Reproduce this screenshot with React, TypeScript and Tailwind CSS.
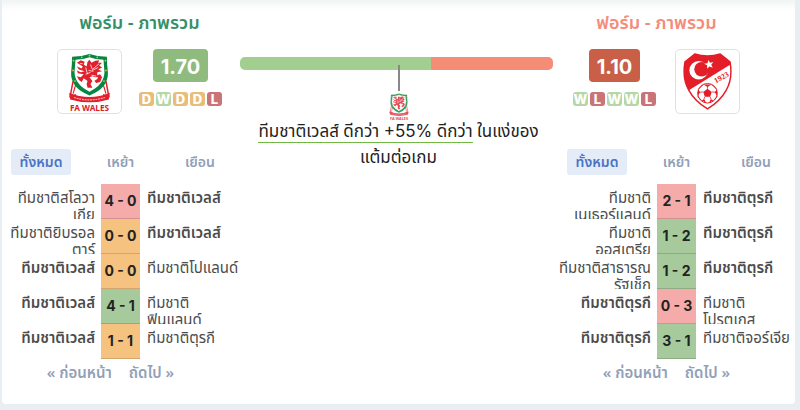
import React from "react";

type Result = "W" | "D" | "L";
type Match = { home: string[]; away: string[]; score: string; result: Result; bold: "home" | "away" };

const badgeColor: Record<Result, string> = { W: "bg-[#b5d7a5]", D: "bg-[#e9bd79]", L: "bg-[#c97476]" };
const scoreColor: Record<Result, string> = {
  W: "bg-[#a7ca9d] border-[#8dac85]",
  D: "bg-[#f5c27f] border-[#d1a56d]",
  L: "bg-[#f6abab] border-[#d29292]",
};

const wales = "ทีมชาติเวลส์";
const turkey = "ทีมชาติตุรกี";

const walesMatches: Match[] = [
  { home: ["ทีมชาติสโลวา", "เกีย"], away: [wales], score: "4 - 0", result: "L", bold: "away" },
  { home: ["ทีมชาติยิบรอล", "ตาร์"], away: [wales], score: "0 - 0", result: "D", bold: "away" },
  { home: [wales], away: ["ทีมชาติโปแลนด์"], score: "0 - 0", result: "D", bold: "home" },
  { home: [wales], away: ["ทีมชาติ", "ฟินแลนด์"], score: "4 - 1", result: "W", bold: "home" },
  { home: [wales], away: [turkey], score: "1 - 1", result: "D", bold: "home" },
];

const turkeyMatches: Match[] = [
  { home: ["ทีมชาติ", "เนเธอร์แลนด์"], away: [turkey], score: "2 - 1", result: "L", bold: "away" },
  { home: ["ทีมชาติ", "ออสเตรีย"], away: [turkey], score: "1 - 2", result: "W", bold: "away" },
  { home: ["ทีมชาติสาธารณ", "รัฐเช็ก"], away: [turkey], score: "1 - 2", result: "W", bold: "away" },
  { home: [turkey], away: ["ทีมชาติ", "โปรตุเกส"], score: "0 - 3", result: "L", bold: "home" },
  { home: [turkey], away: ["ทีมชาติจอร์เจีย"], score: "3 - 1", result: "W", bold: "home" },
];

function WalesCrest({ className }: { className: string }) {
  return (
    <svg viewBox="0 0 44 60" className={className} role="img" aria-label="FA Wales">
      <path d="M5 29 L2 45 L8 43 M39 29 L42 45 L36 43" fill="#fff" stroke="#e0202c" strokeWidth="1.5" />
      <path d="M8 32 L5 42 M36 32 L39 42" stroke="#e0202c" strokeWidth="1.2" />
      <path d="M4 4 Q13 4 22 1 Q31 4 40 4 Q40 12 41 20 Q42 36 22 44 Q2 36 3 20 Q4 12 4 4Z" fill="#078641" />
      <path d="M7.500 7 Q16 7 22 4.500 Q28 7 36.500 7 Q37 14 37.500 20 Q37 33 22 40 Q7 33 6.500 20 Q7 14 7.500 7Z" fill="#fff" />
      <g fill="#e3c52d">
        <circle cx="5.500" cy="8" r=".9" /><circle cx="5" cy="18" r=".9" /><circle cx="7" cy="29" r=".9" />
        <circle cx="38.500" cy="8" r=".9" /><circle cx="39" cy="18" r=".9" /><circle cx="37" cy="29" r=".9" />
        <circle cx="14" cy="4.500" r=".9" /><circle cx="22" cy="2.800" r=".9" /><circle cx="30" cy="4.500" r=".9" />
      </g>
      <path
        d="M9 10 L13 7.500 L17 9 L16 12 L19 14 L20 9 L22 7 L24 10 L28 8 L32 7.500 L31 10 L35 10 L32 13 L35 15 L31 17 L35 19 L30 20 L30 23 L33 22 L35 25 L33 30 L29 31 L27 29 L30 27 L31 25 L28 25 L25 24 L22 25 L25 29 L23 32 L25 36 L20 36 L19 32 L20 29 L16 26 L14 30 L11 28 L9 24 L13 25 L16 22 L10 21 L9 18 L13 20 L17 19 L11 17 L9 14 L14 16 L15 14Z"
        fill="#e0202c"
      />
      <path d="M23 12 L25 17 L32 11 M25 18 L31 15 M21 18 L26 19 M18 22 L23 20 M12 11 L15 11 M24 23 L29 24 M18 15 L20 22" stroke="#fff" strokeWidth=".8" fill="none" />
      <path d="M1 41 Q22 50 43 41 L42 48 Q22 54 2 48Z" fill="#e0202c" />
      <path d="M6 46 Q22 51 38 46" fill="none" stroke="#f7b0b3" strokeWidth="1.2" strokeDasharray="2 .8" />
      <text x="22" y="59.500" textAnchor="middle" fontSize="8.500" fontWeight="700" fill="#d8202c" fontFamily="'Noto Sans', sans-serif">FA WALES</text>
    </svg>
  );
}

function TurkeyCrest({ className }: { className: string }) {
  return (
    <svg viewBox="0 0 50 58" className={className} role="img" aria-label="Türkiye 1923">
      <path d="M12 1 Q25 5 38 1 L48 9 Q51 26 44 38 Q38 49 25 57 Q12 49 6 38 Q-1 26 2 9Z" fill="#fff" stroke="#e31e28" strokeWidth="1.5" />
      <path d="M12 1 Q25 5 38 1 L48 9 L48 12 L6 38 Q-1 26 2 9Z" fill="#e31e28" />
      <circle cx="16" cy="17.500" r="9.500" fill="#fff" />
      <circle cx="19" cy="16.500" r="7.500" fill="#e31e28" />
      <path d="M26 7 L27.500 9.800 L31 9 L28.800 11.800 L30.400 15 L27 13.600 L24.500 16 L24.700 12.500 L21.500 11 L25 10.300Z" fill="#fff" />
      <text transform="translate(33.500 31) rotate(-29)" fontSize="8" fontWeight="700" fill="#e31e28" fontFamily="Liberation Serif, serif">1923</text>
      <circle cx="25" cy="41" r="10" fill="#fff" stroke="#e31e28" />
      <path d="M25 36.500 L29.300 39.600 L27.700 44.600 L22.300 44.600 L20.700 39.600Z M21 32 L29 32 L25 34.500Z M34.500 37 L35 44 L32.500 40Z M31.500 48 L26.500 51 L28 47.500Z M18.500 48 L23.500 51 L22 47.500Z M15.500 37 L15 44 L17.500 40Z" fill="#e31e28" />
      <path d="M25 36.500 V34 M29.300 39.600 L33 40 M27.700 44.600 L29 48 M22.300 44.600 L21 48 M20.700 39.600 L17 40 M29 32 L34.500 37 M21 32 L15.500 37 M35 44 L31.500 48 M15 44 L18.500 48" stroke="#e31e28" strokeWidth=".8" />
    </svg>
  );
}

function CrestBox({ children }: { children: React.ReactNode }) {
  return (
    <div className="flex size-[65px] items-center justify-center rounded-[5px] border border-[#dfe1ea] bg-white">{children}</div>
  );
}

function FormScore({ value, color, form }: { value: string; color: string; form: Result[] }) {
  return (
    <div className="flex flex-col items-center gap-[10px]">
      <div className={`flex h-[33px] items-center rounded-[4px] px-2 pt-[3px] font-['Inter',sans-serif] text-[20px] font-bold text-white ${color}`}>
        {value}
      </div>
      <div className="flex gap-[2px]">
        {form.map((r, i) => (
          <span
            key={i}
            className={`flex h-[14px] w-[15px] items-center justify-center rounded-[3px] pt-px font-['Inter',sans-serif] text-[13px] font-extrabold leading-[13px] text-white ${badgeColor[r]}`}
          >
            {r}
          </span>
        ))}
      </div>
    </div>
  );
}

function Lines({ lines }: { lines: string[] }) {
  return (
    <div className="h-[35px] overflow-y-clip whitespace-nowrap pt-[5px] leading-[17px]">
      {lines.map((line) => (
        <div key={line}>{line}</div>
      ))}
    </div>
  );
}

function Results({ matches, label }: { matches: Match[]; label: string }) {
  return (
    <section>
      <div className="grid grid-cols-[60px_1fr_60px] text-[14px] font-semibold leading-[26px] text-[#92a0b8]">
        <button className="rounded-[3px] bg-[#e4ecf7] text-[#4a74c4]">ทั้งหมด</button>
        <button>เหย้า</button>
        <button>เยือน</button>
      </div>
      <table aria-label={label} className="mt-[9px] w-full table-fixed border-separate border-spacing-0 text-[15px] text-[#4c4c4c]">
        <colgroup>
          <col />
          <col className="w-[39px]" />
          <col />
        </colgroup>
        <tbody>
          {matches.map((m, i) => (
            <tr key={i} className="h-[35px]">
              <td className={`p-0 pr-[6px] align-top ${m.bold === "home" ? "font-semibold" : ""}`}>
                <div className="flex justify-end text-right"><Lines lines={m.home} /></div>
              </td>
              <td className={`border-b p-0 text-center font-['Inter',sans-serif] text-[14px] font-bold leading-[34px] text-[#222] ${scoreColor[m.result]}`}>
                <span className="whitespace-nowrap">{m.score}</span>
              </td>
              <td className={`p-0 pl-[7px] align-top ${m.bold === "away" ? "font-semibold" : ""}`}>
                <Lines lines={m.away} />
              </td>
            </tr>
          ))}
        </tbody>
      </table>
      <div className="flex justify-center gap-[17px] pr-5 text-[15px] font-semibold leading-[26px] text-[#92a0b8]">
        <button>« ก่อนหน้า</button>
        <button>ถัดไป »</button>
      </div>
    </section>
  );
}

export default function App() {
  return (
    <div className="bg-[#e9eef3] pb-[6px] pl-[2px] pr-[5px] font-['Noto_Sans','Noto_Sans_Thai',sans-serif]">
      <main className="grid grid-cols-[238px_1fr_238px] rounded-b-[4px] bg-white bg-linear-to-b from-[#f1f4f4] to-white to-[10px] pb-[19px] pt-[10px]">
        <div className="pl-[9px] pr-[10px]">
          <header className="-mr-[10px] h-[139px] pl-[28px]">
            <h2 className="text-center text-[18px] font-semibold leading-6 text-[#35906a]">ฟอร์ม - ภาพรวม</h2>
            <div className="mt-[15px] flex justify-center gap-[17px]">
              <CrestBox><WalesCrest className="h-[58px] w-[43px]" /></CrestBox>
              <FormScore value="1.70" color="bg-[#90bb7f]" form={["D", "W", "D", "D", "L"]} />
            </div>
          </header>
          <Results matches={walesMatches} label={wales} />
        </div>

        <div className="flex flex-col items-center pt-[47px]">
          <div className="w-full pr-1">
            <div className="flex h-[13px] overflow-hidden rounded-[5px]">
              <div className="w-[61%] bg-[#a2ce90]" />
              <div className="flex-1 bg-[#f58c76]" />
            </div>
          </div>
          <div className="z-10 -mt-[5px] h-[26px] w-[2px] bg-[#888]" />
          <WalesCrest className="mt-[2px] h-[27px] w-[20px] opacity-80" />
          <p className="-mt-[2px] whitespace-nowrap text-center text-[17px] leading-[26px] text-[#222]">
            <span className="border-b border-[#72b944]">
              ทีมชาติเวลส์ ดีกว่า <span className="font-['Inter',sans-serif]">+55%</span> ดีกว่า
            </span>{" "}
            ในแง่ของ
            <br />
            แต้มต่อเกม
          </p>
        </div>

        <div className="pl-[10px] pr-[9px]">
          <header className="-ml-[10px] h-[139px] pr-[30px]">
            <h2 className="text-center text-[18px] font-semibold leading-6 text-[#f58c7a]">ฟอร์ม - ภาพรวม</h2>
            <div className="mt-[15px] flex justify-center gap-[19px]">
              <FormScore value="1.10" color="bg-[#c95f47]" form={["W", "L", "W", "W", "L"]} />
              <CrestBox><TurkeyCrest className="h-[57px] w-[49px]" /></CrestBox>
            </div>
          </header>
          <Results matches={turkeyMatches} label={turkey} />
        </div>
      </main>
    </div>
  );
}
